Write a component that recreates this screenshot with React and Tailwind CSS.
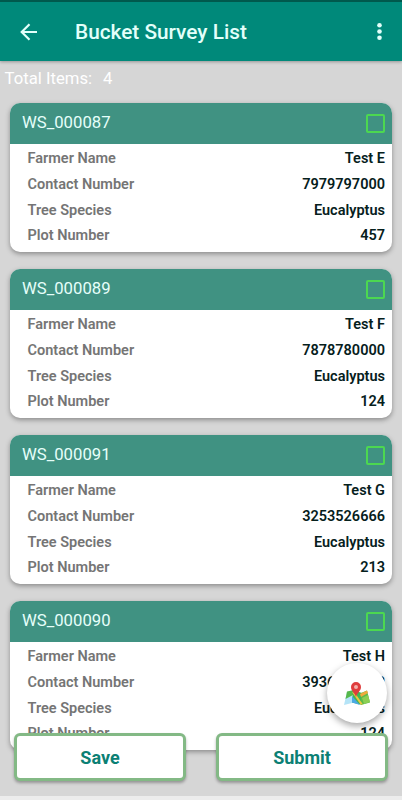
import { useState } from 'react';

const surveys = [
  { id: 'WS_000087', farmer: 'Test E', contact: '7979797000', species: 'Eucalyptus', plot: '457' },
  { id: 'WS_000089', farmer: 'Test F', contact: '7878780000', species: 'Eucalyptus', plot: '124' },
  { id: 'WS_000091', farmer: 'Test G', contact: '3253526666', species: 'Eucalyptus', plot: '213' },
  { id: 'WS_000090', farmer: 'Test H', contact: '3936526660', species: 'Eucalyptus', plot: '124' },
];

function Row({ label, value }) {
  return (
    <div className="flex h-[25.8px] items-center justify-between text-[14.5px] font-semibold">
      <span className="text-[#757575]">{label}</span>
      <span className="text-[#06201c]">{value}</span>
    </div>
  );
}

function SurveyCard({ item, checked, onToggle }) {
  return (
    <div className="h-[149px] shrink-0 overflow-hidden rounded-[10px] bg-white shadow-[0_2px_5px_rgba(0,0,0,0.35)]">
      <div className="flex h-[41px] items-center justify-between bg-[#409282] pr-[7px] pl-[12px]">
        <span className="pb-[2px] text-[16.7px] text-[#e6fffa]">{item.id}</span>
        <button
          onClick={onToggle}
          aria-label={item.id}
          className={`h-[19px] w-[19px] rounded-[2px] border-2 border-[#4cd850] ${checked ? 'bg-[#4cd850]' : ''}`}
        />
      </div>
      <div className="pt-[2px] pr-[7px] pl-[17.5px]">
        <Row label="Farmer Name" value={item.farmer} />
        <Row label="Contact Number" value={item.contact} />
        <Row label="Tree Species" value={item.species} />
        <Row label="Plot Number" value={item.plot} />
      </div>
    </div>
  );
}

function MapIcon() {
  return (
    <svg width="28" height="26" viewBox="0 0 28 26">
      <path d="M4 11 L10 9 L9 22 L1 24 Z" fill="#b5e4f7" />
      <path d="M4 10.500 L11 9 L10 14 L2.500 18 Z" fill="#56b84c" />
      <path d="M10 9 L19 12 L19 24 L9 21.500 Z" fill="#43b655" />
      <path d="M9 15 L17 24 L9 21.500 Z" fill="#4aa9e4" />
      <path d="M18 12 L24 9.500 L27 21.500 L18 24 Z" fill="#5cbb4a" />
      <path d="M17 13 L24 9.500 L25 12 L18 16 Z" fill="#f0a93c" />
      <path d="M19 17 L25 14 L27 21 L21 23 Z" fill="#8ccf53" />
      <path d="M9 11 L12 12 L20 23.500 L17.500 23.500 Z" fill="#f0c63f" />
      <path d="M13 16 C12 12 8 10 8 6 A5 5 0 0 1 18 6 C18 10 14 12 13 16 Z" fill="#df3d3d" />
      <circle cx="13" cy="6" r="2" fill="#f4b0aa" />
    </svg>
  );
}

export default function App() {
  const [selected, setSelected] = useState([]);

  const toggle = (id) => {
    setSelected(selected.includes(id) ? selected.filter((s) => s !== id) : [...selected, id]);
  };

  return (
    <div className="relative flex h-[800px] w-[402px] flex-col overflow-hidden bg-[#d6d6d6] font-['Roboto',sans-serif]">
      <header className="z-10 flex h-[61px] shrink-0 items-center border-t-2 border-[#00594d] bg-[#00897a] pr-[12px] pl-[20px] text-[#e3fffa] shadow-[0_1px_3px_rgba(0,0,0,0.3)]">
        <svg width="18" height="18" viewBox="0 0 18 18" fill="none" stroke="currentColor" strokeWidth="2.200">
          <path d="M17 9H2M9.500 1.200L1.700 9L9.500 16.800" />
        </svg>
        <h1 className="ml-[37px] flex-1 pt-[3px] text-[20.8px] font-medium">Bucket Survey List</h1>
        <svg width="20" height="20" viewBox="0 0 20 20" fill="currentColor">
          <circle cx="9.500" cy="3.200" r="2.300" />
          <circle cx="9.500" cy="9.500" r="2.300" />
          <circle cx="9.500" cy="15.800" r="2.300" />
        </svg>
      </header>

      <div className="flex h-[42px] shrink-0 items-center gap-[11px] pb-[7px] pl-[4.5px] text-[16.7px] text-white">
        <span>Total Items:</span>
        <span>4</span>
      </div>

      <main className="flex min-h-0 flex-1 flex-col gap-[17px] pr-[10px] pl-[10px]">
        {surveys.map((item) => (
          <SurveyCard
            key={item.id}
            item={item}
            checked={selected.includes(item.id)}
            onToggle={() => toggle(item.id)}
          />
        ))}
      </main>

      <div className="h-[4px] shrink-0 bg-[#ececec]" />

      {/* floating map button */}
      <button aria-label="Map" className="absolute top-[663px] left-[327px] flex h-[60px] w-[60px] items-center justify-center rounded-full bg-white pt-[2px] shadow-[0_3px_7px_rgba(0,0,0,0.35)]">
        <MapIcon />
      </button>

      {/* bottom actions, over the list */}
      <div className="absolute top-[733px] right-[14px] left-[14px] flex justify-between text-[18px] font-bold text-[#0b8074]">
        <button className="h-[48px] w-[172px] rounded-[6px] border-[3px] border-[#83b985] bg-white pt-px shadow-[0_2px_3px_rgba(0,0,0,0.3)]">Save</button>
        <button className="h-[48px] w-[172px] rounded-[6px] border-[3px] border-[#83b985] bg-white pt-px shadow-[0_2px_3px_rgba(0,0,0,0.3)]">Submit</button>
      </div>
    </div>
  );
}
